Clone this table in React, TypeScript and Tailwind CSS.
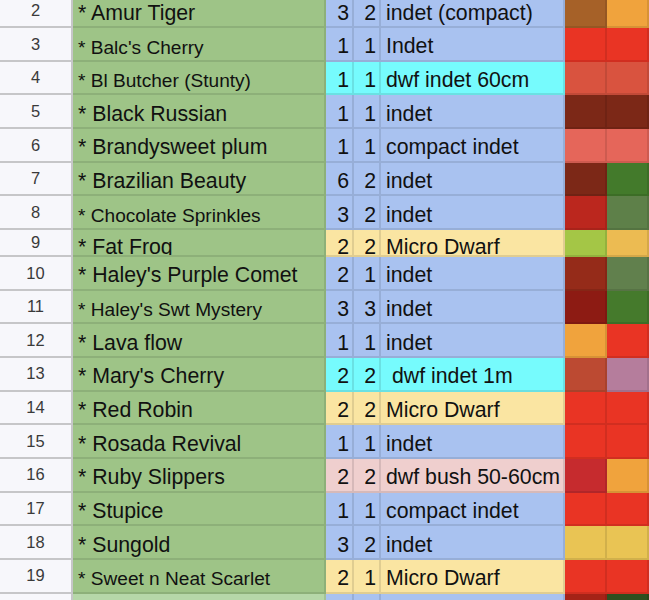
import React from "react";

type Row = {
  n: number;
  name: string;
  small?: boolean;
  a: string;
  b: string;
  c: string;
  fill: string;
  d: string;
  e: string;
  short?: boolean;
  nameFill?: string;
};

const BLUE = "bg-[#a9c2f0]";
const CYAN = "bg-[#76fbfd]";
const YELLOW = "bg-[#fae5a2]";
const PINK = "bg-[#efcfce]";
const RED = "bg-[#e93424]";

const rows: Row[] = [
  { n: 2, name: "* Amur Tiger", a: "3", b: "2", c: "indet (compact)", fill: BLUE, d: "bg-[#a66128]", e: "bg-[#f0a33d]" },
  { n: 3, name: "* Balc's Cherry", small: true, a: "1", b: "1", c: "Indet", fill: BLUE, d: RED, e: RED },
  { n: 4, name: "* Bl Butcher (Stunty)", small: true, a: "1", b: "1", c: "dwf indet 60cm", fill: CYAN, d: "bg-[#d9533f]", e: "bg-[#d9533f]" },
  { n: 5, name: "* Black Russian", a: "1", b: "1", c: "indet", fill: BLUE, d: "bg-[#7c2817]", e: "bg-[#7c2817]" },
  { n: 6, name: "* Brandysweet plum", a: "1", b: "1", c: "compact indet", fill: BLUE, d: "bg-[#e5665a]", e: "bg-[#e5665a]" },
  { n: 7, name: "* Brazilian Beauty", a: "6", b: "2", c: "indet", fill: BLUE, d: "bg-[#7c2817]", e: "bg-[#437a2b]" },
  { n: 8, name: "* Chocolate Sprinkles", small: true, a: "3", b: "2", c: "indet", fill: BLUE, d: "bg-[#bb271e]", e: "bg-[#5e8049]" },
  { n: 9, name: "* Fat Frog", a: "2", b: "2", c: "Micro Dwarf", fill: YELLOW, d: "bg-[#a4c646]", e: "bg-[#ecbb52]", short: true },
  { n: 10, name: "* Haley's Purple Comet", a: "2", b: "1", c: "indet", fill: BLUE, d: "bg-[#952b19]", e: "bg-[#61804d]" },
  { n: 11, name: "* Haley's Swt Mystery", small: true, a: "3", b: "3", c: "indet", fill: BLUE, d: "bg-[#8d1b13]", e: "bg-[#457a2c]" },
  { n: 12, name: "* Lava flow", a: "1", b: "1", c: "indet", fill: BLUE, d: "bg-[#f0a33d]", e: RED },
  { n: 13, name: "* Mary's Cherry", a: "2", b: "2", c: " dwf indet 1m", fill: CYAN, d: "bg-[#bc4a32]", e: "bg-[#b57d9c]" },
  { n: 14, name: "* Red Robin", a: "2", b: "2", c: "Micro Dwarf", fill: YELLOW, d: RED, e: RED },
  { n: 15, name: "* Rosada Revival", a: "1", b: "1", c: "indet", fill: BLUE, d: RED, e: RED },
  { n: 16, name: "* Ruby Slippers", a: "2", b: "2", c: "dwf bush 50-60cm", fill: PINK, d: "bg-[#c62b2e]", e: "bg-[#f0a33d]" },
  { n: 17, name: "* Stupice", a: "1", b: "1", c: "compact indet", fill: BLUE, d: RED, e: RED },
  { n: 18, name: "* Sungold", a: "3", b: "2", c: "indet", fill: BLUE, d: "bg-[#e9c454]", e: "bg-[#e9c454]" },
  { n: 19, name: "* Sweet n Neat Scarlet", small: true, a: "2", b: "1", c: "Micro Dwarf", fill: YELLOW, d: RED, e: RED },
  { n: 20, name: "", a: "", b: "", c: "", fill: BLUE, d: "bg-[#a52317]", e: "bg-[#2e4f1f]", nameFill: "bg-[#b6d7a8]" },
];

function Txt({ children, short, size, pad }: { children: React.ReactNode; short?: boolean; size: string; pad?: string }) {
  return (
    <span className={`${size} leading-none whitespace-pre text-[#111] ${short ? "-mb-[3px]" : pad ?? "pb-[2px]"}`}>
      {children}
    </span>
  );
}

function SheetRow({ r, first }: { r: Row; first?: boolean }) {
  const h = r.short ? "h-[27px]" : "h-[33.67px]";
  const cell = "flex items-end h-full border-b-2 border-r-2 border-black/10 overflow-hidden shrink-0";
  const big = "text-[21.3px]";
  return (
    <div className={`flex ${h} ${first ? "-mt-[5.67px]" : ""}`}>
      <div className="flex items-center justify-center h-full w-[73px] shrink-0 bg-[#f7f7fb] border-b-2 border-r-2 border-[#c6c6c8]">
        <span className="text-[16.5px] leading-none text-[#3a3a3a]">{r.n}</span>
      </div>
      <div className={`${cell} w-[253px] pl-[5px] ${r.nameFill ?? "bg-[#9ec487]"}`}>
        <Txt short={r.short} size={r.small ? "text-[19.1px]" : big} pad={r.small ? "pb-[3px]" : "pb-[2px]"}>
          {r.name}
        </Txt>
      </div>
      <div className={`${cell} w-[28px] justify-end pr-[3px] ${r.fill}`}>
        <Txt short={r.short} size={big}>{r.a}</Txt>
      </div>
      <div className={`${cell} w-[27px] justify-end pr-[3px] ${r.fill}`}>
        <Txt short={r.short} size={big}>{r.b}</Txt>
      </div>
      <div className={`${cell} w-[184px] pl-[5px] ${r.fill}`}>
        <Txt short={r.short} size={big}>{r.c}</Txt>
      </div>
      <div className={`${cell} w-[42px] ${r.d}`} />
      <div className={`${cell} flex-1 ${r.e}`} />
    </div>
  );
}

export default function App() {
  return (
    <div className="w-[649px] h-[600px] overflow-hidden bg-white [font-family:'Liberation_Sans',Arial,sans-serif]">
      {rows.map((r, i) => (
        <SheetRow key={r.n} r={r} first={i === 0} />
      ))}
    </div>
  );
}
